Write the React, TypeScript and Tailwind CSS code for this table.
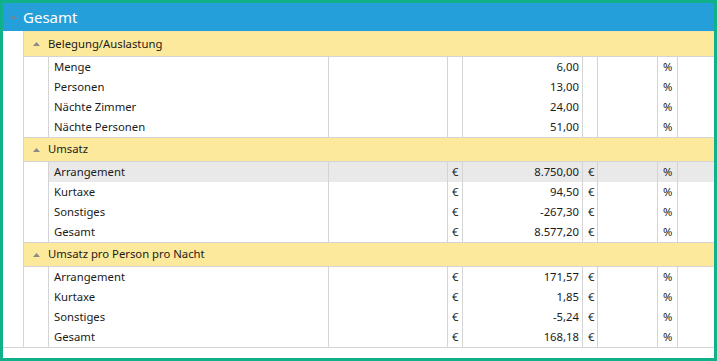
import React from "react";

type Row = { label: string; unit?: string; value: string; unit2?: string; selected?: boolean };
type Group = { title: string; rows: Row[] };

const groups: Group[] = [
  {
    title: "Belegung/Auslastung",
    rows: [
      { label: "Menge", value: "6,00" },
      { label: "Personen", value: "13,00" },
      { label: "Nächte Zimmer", value: "24,00" },
      { label: "Nächte Personen", value: "51,00" },
    ],
  },
  {
    title: "Umsatz",
    rows: [
      { label: "Arrangement", unit: "€", value: "8.750,00", unit2: "€", selected: true },
      { label: "Kurtaxe", unit: "€", value: "94,50", unit2: "€" },
      { label: "Sonstiges", unit: "€", value: "-267,30", unit2: "€" },
      { label: "Gesamt", unit: "€", value: "8.577,20", unit2: "€" },
    ],
  },
  {
    title: "Umsatz pro Person pro Nacht",
    rows: [
      { label: "Arrangement", unit: "€", value: "171,57", unit2: "€" },
      { label: "Kurtaxe", unit: "€", value: "1,85", unit2: "€" },
      { label: "Sonstiges", unit: "€", value: "-5,24", unit2: "€" },
      { label: "Gesamt", unit: "€", value: "168,18", unit2: "€" },
    ],
  },
];

function Caret({ color }: { color: string }) {
  return (
    <svg width="7" height="4" viewBox="0 0 7 4" className="shrink-0">
      <polygon points="0,4 7,4 3.5,0" fill={color} />
    </svg>
  );
}

function DataRow({ row }: { row: Row }) {
  return (
    <div className={`flex h-[20px] ${row.selected ? "bg-[#e9e9e9]" : ""}`}>
      <div className="w-[280px] border-l border-[#d4d4d4] pl-[5px] flex items-center">{row.label}</div>
      <div className="w-[119px] border-l border-[#d4d4d4]" />
      <div className="w-[15px] border-l border-[#d4d4d4] pl-[4px] flex items-center">{row.unit}</div>
      <div className="w-[120px] border-l border-[#d4d4d4] pr-[3px] flex items-center justify-end">{row.value}</div>
      <div className="w-[15px] border-l border-[#d4d4d4] pl-[5px] flex items-center">{row.unit2}</div>
      <div className="w-[60px] border-l border-[#d4d4d4]" />
      <div className="w-[20px] border-l border-[#d4d4d4] pl-[5px] flex items-center">%</div>
      <div className="flex-1 border-l border-[#d4d4d4]" />
    </div>
  );
}

export default function App() {
  return (
    <div
      className="w-[717px] h-[361px] border-[3px] border-[#10b08b] bg-white text-[11.3px] text-[#1b1b1b] overflow-hidden flex flex-col"
      style={{ fontFamily: '"Noto Sans", "Open Sans", sans-serif' }}
    >
      {/* top level header */}
      <div className="h-[28px] shrink-0 bg-[#259fda] flex items-center">
        <div className="w-[20px] flex justify-center pl-[1px]">
          <Caret color="#6f8797" />
        </div>
        <span className="text-[15px] text-white leading-none">Gesamt</span>
      </div>

      <div className="flex border-b border-[#d4d4d4]">
        <div className="w-[20px] shrink-0" />
        <div className="flex-1 border-l border-[#d4d4d4]">
          {groups.map((g, gi) => (
            <div key={g.title}>
              <div
                className={`bg-[#fde99c] border-t border-b flex items-center ${
                  gi === 0 ? "h-[26px] border-t-[#f3e3a6] border-b-[#d4d4d4]" : "h-[25px] border-[#d4d4d4]"
                }`}
              >
                <div className="w-[24px] flex justify-center">
                  <Caret color="#8a8a8a" />
                </div>
                <span>{g.title}</span>
              </div>
              {g.rows.map((r, i) => (
                <div key={i} className="pl-[24px]">
                  <DataRow row={r} />
                </div>
              ))}
            </div>
          ))}
        </div>
      </div>
    </div>
  );
}
